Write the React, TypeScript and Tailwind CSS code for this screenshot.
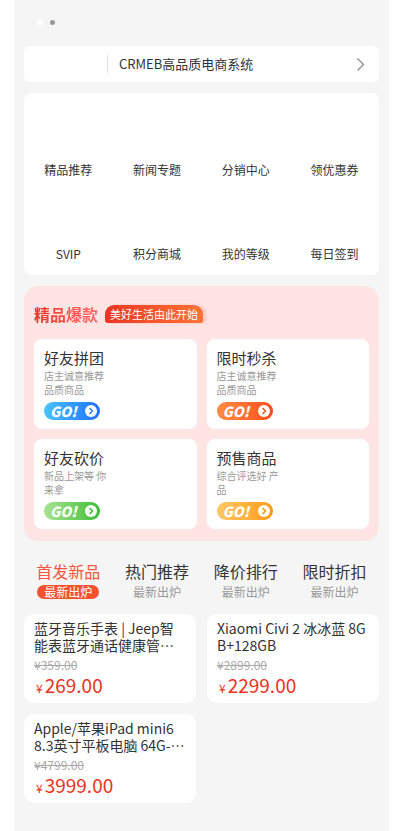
import React from "react";

const FONT = { fontFamily: '"Noto Sans CJK SC", "Noto Sans", sans-serif' };

const menus = ["精品推荐", "新闻专题", "分销中心", "领优惠券", "SVIP", "积分商城", "我的等级", "每日签到"];

const hots = [
  { t: "好友拼团", s: "店主诚意推荐品质商品", g: "bg-gradient-to-r from-[#4cc2ff] to-[#2370ff]", c: "#2a7bff" },
  { t: "限时秒杀", s: "店主诚意推荐品质商品", g: "bg-gradient-to-r from-[#ff8c42] to-[#ff4a1c]", c: "#ff5322" },
  { t: "好友砍价", s: "新品上架等 你来拿", g: "bg-gradient-to-r from-[#a6e38f] to-[#36be33]", c: "#3cbf38" },
  { t: "预售商品", s: "综合评选好 产品", g: "bg-gradient-to-r from-[#ffc866] to-[#ff9a00]", c: "#ff9c05" },
];

const tabs = ["首发新品", "热门推荐", "降价排行", "限时折扣"];

const goods = [
  { t: "蓝牙音乐手表 | Jeep智能表蓝牙通话健康管理运动手表", o: "¥359.00", p: "269.00" },
  { t: "Xiaomi Civi 2 冰冰蓝 8GB+128GB", o: "¥2899.00", p: "2299.00" },
  { t: "Apple/苹果iPad mini6 8.3英寸平板电脑 64G-WLAN版", o: "¥4799.00", p: "3999.00" },
];

function Go({ g, c }: { g: string; c: string }) {
  return (
    <div className={`mt-[5px] flex h-[18px] w-[56px] items-center justify-between rounded-full pl-[6px] pr-[3px] ${g}`}>
      <span className="text-[14px] font-extrabold italic leading-none text-white">GO!</span>
      <span className="flex h-[12px] w-[12px] items-center justify-center rounded-full bg-white">
        <svg width="8" height="8" viewBox="0 0 8 8">
          <polyline points="3,1.5 5.5,4 3,6.5" fill="none" stroke={c} strokeWidth="1.6" strokeLinecap="round" strokeLinejoin="round" />
        </svg>
      </span>
    </div>
  );
}

export default function App() {
  return (
    <div className="min-h-[831px] bg-white" style={FONT}>
      <div className="ml-[14px] min-h-[831px] w-[375px] bg-[#f5f5f5] px-[10px] pb-[20px]">
        <div className="flex items-center gap-[7px] pl-[13px] pt-[19px]">
          <div className="h-[6px] w-[6px] rounded-full bg-white" />
          <div className="h-[5px] w-[5px] rounded-full bg-[#999]" />
        </div>

        <div className="mt-[21px] flex h-[36px] items-center rounded-[6px] bg-white">
          <div className="w-[83px]" />
          <div className="h-[18px] w-px bg-[#ddd]" />
          <div className="ml-[11px] flex-1 text-[13px] text-[#333]">CRMEB高品质电商系统</div>
          <svg className="mr-[14px]" width="9" height="15" viewBox="0 0 9 15">
            <polyline points="1.5,1.5 7.5,7.5 1.5,13.5" fill="none" stroke="#888" strokeWidth="1.2" />
          </svg>
        </div>

        <div className="mt-[11px] grid grid-cols-4 gap-y-[12px] rounded-[8px] bg-white pb-[12px] pt-[14px]">
          {menus.map((m) => (
            <div key={m} className="flex flex-col items-center">
              <div className="h-[46px] w-[46px]" />
              <div className="mt-[8px] text-[12px] leading-[18px] text-[#333]">{m}</div>
            </div>
          ))}
        </div>

        <div className="mt-[11px] rounded-[14px] bg-[#ffe4e4] px-[10px] pb-[12px] pt-[16px]">
          <div className="flex h-[24px] items-center">
            <span className="bg-gradient-to-r from-[#e93323] to-[#ff6a6a] bg-clip-text text-[16px] font-bold text-transparent">
              精品爆款
            </span>
            <span className="ml-[7px] flex h-[18px] w-[98px] items-center rounded-bl-[3px] rounded-br-[2px] rounded-tl-[9px] rounded-tr-[9px] bg-gradient-to-r from-[#e93323] to-[#ff7236] pl-[5px] text-[11px] text-white shadow-[3px_0_3px_rgba(255,140,120,0.35)]">
              美好生活由此开始
            </span>
          </div>
          <div className="mt-[13px] grid grid-cols-2 gap-[10px]">
            {hots.map((h) => (
              <div key={h.t} className="h-[90px] rounded-[8px] bg-white pl-[10px] pt-[9px]">
                <div className="text-[15px] leading-[20px] text-[#333]">{h.t}</div>
                <div className="mt-[1px] h-[28px] w-[64px] text-[10px] leading-[14px] text-[#999]">{h.s}</div>
                <Go g={h.g} c={h.c} />
              </div>
            ))}
          </div>
        </div>

        <div className="mt-[19px] grid grid-cols-4">
          {tabs.map((t, i) => (
            <div key={t} className="flex flex-col items-center">
              <div className={`text-[16px] leading-[22px] ${i === 0 ? "text-[#f4553c]" : "text-[#333]"}`}>{t}</div>
              {i === 0 ? (
                <div className="mt-[3px] flex h-[14px] w-[62px] items-center justify-center rounded-full bg-[#f2522e] text-[12px] leading-none text-white">
                  最新出炉
                </div>
              ) : (
                <div className="mt-[3px] flex h-[14px] items-center text-[12px] leading-none text-[#999]">最新出炉</div>
              )}
            </div>
          ))}
        </div>

        <div className="mt-[15px] grid grid-cols-2 gap-[11px]">
          {goods.map((g) => (
            <div key={g.t} className="rounded-[10px] bg-white px-[10px] pb-[6px] pt-[6px]">
              <div className="line-clamp-2 h-[34px] break-all text-[14px] leading-[17px] text-[#333]">{g.t}</div>
              <div className="mt-[4px] text-[12px] leading-[14px] text-[#aaa] line-through">{g.o}</div>
              <div className="flex h-[25px] items-baseline text-[#e93323]">
                <span className="ml-[2px] mr-[2px] text-[12px]">¥</span>
                <span className="text-[19px] leading-[25px]">{g.p}</span>
              </div>
            </div>
          ))}
        </div>
      </div>
    </div>
  );
}
